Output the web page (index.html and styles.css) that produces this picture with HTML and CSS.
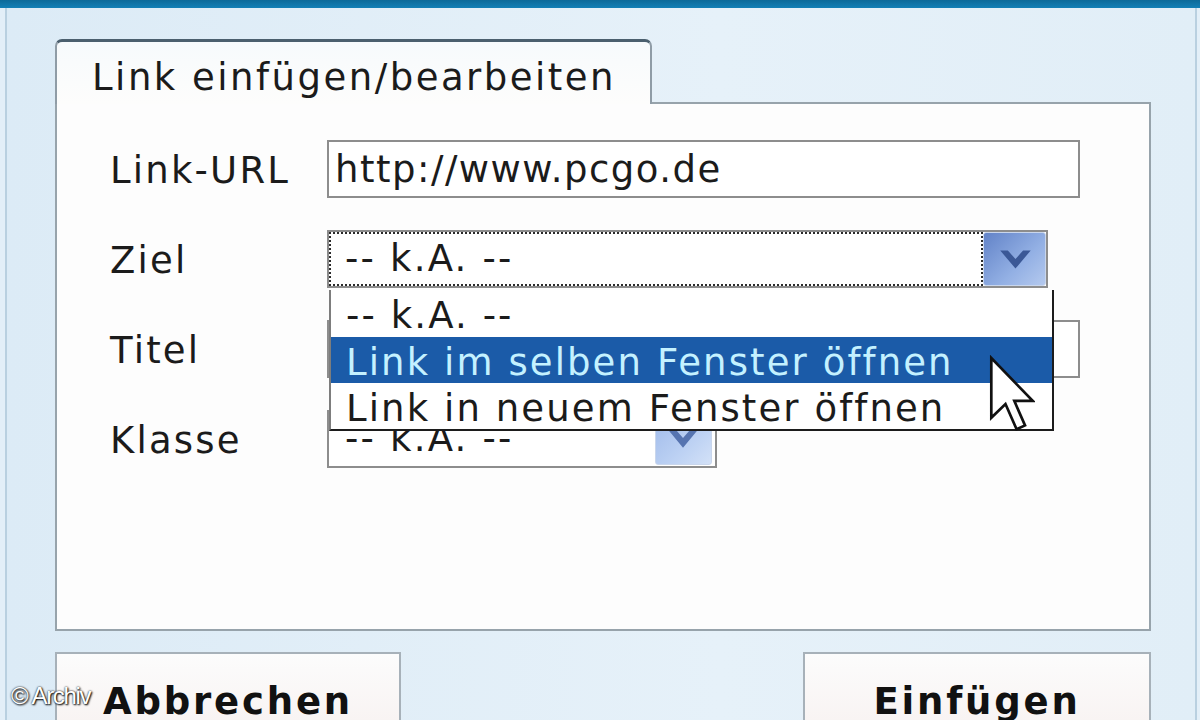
FILE: index.html
```html
<!DOCTYPE html>
<html lang="de">

<head>
    <meta charset="UTF-8">
    <meta name="viewport" content="width=device-width, initial-scale=1.0">
    <title>Link einfügen/bearbeiten</title>
    <link rel="stylesheet" href="styles.css">
</head>

<body>
    <div class="titlebar"></div>
    <div class="window">
        <div class="dialog">
            <div class="tabs">
                <div class="tab">Link einfügen/bearbeiten</div>
                <div class="tab-fill"></div>
            </div>
            <div class="panel">
                <div class="form">
                    <label>Link-URL</label>
                    <div class="input url">http://www.pcgo.de</div>

                    <label>Ziel</label>
                    <div class="select target focused">
                        <span class="value">-- k.A. --</span>
                        <span class="arrow">
                            <svg viewBox="0 0 64 54" width="63" height="54">
                                <polygon points="17,17 25,17 33,26 41,17 49,17 33,36" fill="#3b5896" />
                            </svg>
                        </span>
                        <ul class="dropdown">
                            <li>-- k.A. --</li>
                            <li class="active">Link im selben Fenster öffnen</li>
                            <li>Link in neuem Fenster öffnen</li>
                            <!-- mouse pointer over the open list -->
                            <svg class="pointer" viewBox="0 0 12 20" width="46" height="78">
                                <path d="M0.6 0.6 L0.6 16.2 L4.3 12.6 L7.2 19.2 L9.4 18.2 L6.6 11.8 L11.4 11.8 Z"
                                    fill="#fff" stroke="#111" stroke-width="0.7" stroke-linejoin="miter" />
                            </svg>
                        </ul>
                    </div>

                    <label>Titel</label>
                    <div class="input title"></div>

                    <label>Klasse</label>
                    <div class="select klass">
                        <span class="value">-- k.A. --</span>
                        <span class="arrow">
                            <svg viewBox="0 0 57 52" width="57" height="52">
                                <polygon points="13,16 21,16 28,24 35,16 43,16 28,34" fill="#5674b0" />
                            </svg>
                        </span>
                    </div>
                </div>
            </div>
            <div class="buttons">
                <div class="button">Abbrechen</div>
                <div class="button">Einfügen</div>
            </div>
        </div>
    </div>
    <div class="watermark">© Archiv</div>
</body>

</html>
```

FILE: styles.css
```css
body {
    margin: 0;
    height: 720px;
    overflow: hidden;
    background-color: #e3eff8;
    font-family: 'DejaVu Sans', Verdana, sans-serif;
    color: #1b1b1b;
}

.titlebar {
    height: 8px;
    background: linear-gradient(#0d6a99, #1380b6);
}

.window {
    width: 1188px;
    height: 712px;
    margin-left: 5px;
    border-left: 2px solid #b9d0e0;
    border-right: 2px solid #b9d0e0;
    background: linear-gradient(90deg, #dcebf6, #e6f1f9 60%, #e1eef7);
}

.dialog {
    padding: 31px 44px 0 48px;
}

/* tab strip */
.tabs {
    display: flex;
    height: 65px;
}

.tab {
    width: 597px;
    box-sizing: border-box;
    padding: 14px 0 0 35px;
    border: 2px solid #8f9ca6;
    border-top: 3px solid #4b5f6e;
    border-bottom: none;
    border-radius: 7px 7px 0 0;
    background: linear-gradient(#f7fafc, #fdfdfc);
    font-size: 37px;
    letter-spacing: 2.5px;
    white-space: nowrap;
}

.tab-fill {
    flex: 1;
    border-bottom: 2px solid #97a3ab;
}

/* content panel */
.panel {
    height: 527px;
    box-sizing: border-box;
    padding: 36px 0 0 53px;
    border: 2px solid #97a3ab;
    border-top: none;
    background-color: #fdfdfd;
}

.form {
    display: grid;
    grid-template-columns: 217px auto;
    grid-auto-rows: 58px;
    row-gap: 32px;
    align-items: center;
    justify-items: start;
    font-size: 37px;
    letter-spacing: 2.2px;
}

.form label {
    white-space: nowrap;
    padding-top: 2px;
}

.input {
    height: 58px;
    box-sizing: border-box;
    border: 2px solid #8d8d8d;
    background-color: #fff;
    padding: 6px 0 0 6px;
    white-space: nowrap;
}

.input.url {
    width: 753px;
    letter-spacing: 1.5px;
}

.input.title {
    width: 753px;
}

.select {
    position: relative;
    display: flex;
    height: 58px;
    box-sizing: border-box;
    border: 2px solid #8d8d8d;
    background-color: #fff;
}

.select.target {
    width: 721px;
}

.select.klass {
    width: 390px;
}

.select .value {
    flex: 1;
    padding: 5px 0 0 16px;
    white-space: nowrap;
}

.select.focused .value {
    border: 2px dotted #2b2b2b;
    padding: 3px 0 0 14px;
}

.select .arrow {
    display: flex;
    width: 63px;
    border-radius: 3px;
    border: 1px solid #c9d6ec;
    box-sizing: border-box;
    background: linear-gradient(135deg, #6283c8, #93b0e4 60%, #b4c9ee);
}

.select.klass .arrow {
    width: 57px;
    margin: 1px 3px 1px 0;
    background: linear-gradient(135deg, #9fbaea, #bcd1f3 60%, #d3e1f7);
}

.select .arrow svg {
    display: block;
}

/* open option list */
.dropdown {
    position: absolute;
    top: calc(100% + 4px);
    left: 0;
    width: 725px;
    box-sizing: border-box;
    margin: 0;
    padding: 0;
    list-style: none;
    border: 2px solid #1c1c1c;
    border-left-color: #7d7d7d;
    border-top: none;
    background-color: #fff;
    z-index: 2;
}

.dropdown li {
    height: 46px;
    box-sizing: border-box;
    padding: 5px 0 0 15px;
    line-height: 41px;
    letter-spacing: 2.1px;
    white-space: nowrap;
}

.dropdown li:first-child {
    height: 47px;
}

.dropdown li.active {
    background-color: #1b5ba8;
    color: #c4f1ff;
}

.pointer {
    position: absolute;
    left: 658px;
    top: 65px;
}

/* bottom buttons */
.buttons {
    display: flex;
    justify-content: space-between;
    margin-top: 21px;
}

.button {
    width: 346px;
    height: 92px;
    box-sizing: border-box;
    border: 2px solid #a7b1b9;
    background: linear-gradient(#fcfcfc, #f7f1f0);
    display: flex;
    align-items: center;
    justify-content: center;
    padding-top: 6px;
    font-size: 37px;
    font-weight: bold;
    letter-spacing: 2.8px;
    color: #111;
}

.button + .button {
    width: 348px;
}

.watermark {
    position: absolute;
    left: 11px;
    top: 682px;
    font-family: 'Liberation Sans', Arial, sans-serif;
    font-size: 24px;
    letter-spacing: -1.3px;
    color: #fff;
    text-shadow: 0 0 2px #000, 1px 1px 2px #000;
}
```
